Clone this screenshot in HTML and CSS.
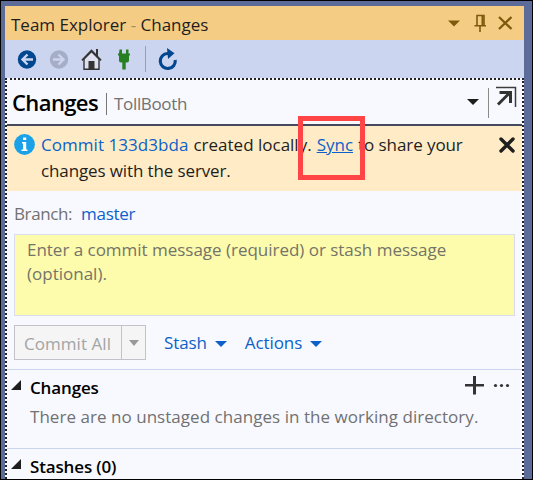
FILE: index.html
```html
<!DOCTYPE html>
<html lang="en">
<head>
<meta charset="utf-8">
<title>Team Explorer - Changes</title>
<link rel="stylesheet" href="styles.css">
</head>
<body>
<div class="window">
  <div class="panel">
    <header class="titlebar">
      <span class="title">Team Explorer <span class="dash">-</span> Changes</span>
      <svg class="title-icons" width="66" height="20" viewBox="0 0 66 20" fill="none" stroke="#7d5a0c">
        <path d="M0 7.500h12l-6 6z" fill="#7d5a0c" stroke="none"/>
        <path d="M29 12.500V2.500h7v10M26.500 12.800h11.500M32 13v6" stroke-width="1.600"/>
        <path d="M34.500 2v10" stroke-width="2"/>
        <path d="M51 4l12.500 12M63.500 4L51 16" stroke-width="2.300"/>
      </svg>
    </header>
    <nav class="toolbar">
      <svg class="tools" width="170" height="38" viewBox="0 0 170 38">
        <circle cx="22" cy="19.500" r="9.200" fill="#00478f"/>
        <path d="M28 19.500H18M22.500 14.500l-5 5 5 5" fill="none" stroke="#ccd5f0" stroke-width="2.400"/>
        <circle cx="54" cy="19.500" r="9.200" fill="#a6aec7"/>
        <path d="M48 19.500H58M53.500 14.500l5 5-5 5" fill="none" stroke="#ccd5f0" stroke-width="2.400"/>
        <path d="M79 19V29.300H94V19L86.500 11.500z" fill="#dedff0" stroke="#333" stroke-width="1.400"/>
        <path d="M77 20.300l9.500-9.800 9.500 9.800" fill="none" stroke="#333" stroke-width="1.800"/>
        <path d="M91 9h2v7h-2zM83.500 21h6v8h-6z" fill="#333"/>
        <path d="M114.500 9.500h2.500v4h4v-4h2.500v4h1.500v2h-1v5q0 2-2 2h-1.300v7h-3.400v-7h-1.300q-2 0-2-2v-5h-1v-2h1z" fill="#267f20"/>
        <path d="M140.500 6v26" stroke="#8aa2cf" stroke-width="1"/>
        <path d="M164 13.500H162.500A7.500 7.500 0 1 0 170.200 20" fill="none" stroke="#00478f" stroke-width="3.200"/>
        <path d="M162 8l7.500 5.300-6.500 5.700z" fill="#00478f"/>
      </svg>
    </nav>
    <main class="page">
      <section class="heading">
        <h1 class="page-title">Changes</h1>
        <i class="rule"></i>
        <span class="repo">TollBooth</span>
        <svg class="heading-icons" width="50" height="32" viewBox="0 0 50 32">
          <path d="M0 13h12l-6 6z" fill="#1e1e1e"/>
          <path d="M21.500 2v30" stroke="#8a8a8a"/>
          <path d="M29 1.500h19.500V21" fill="none" stroke="#3c3c3c" stroke-width="1.500"/>
          <path d="M31 18.500L43 6.500M32.500 6.500h11V17" fill="none" stroke="#333" stroke-width="3"/>
        </svg>
      </section>
      <section class="notice">
        <svg class="info" width="21" height="21" viewBox="0 0 21 21">
          <circle cx="10.500" cy="10.500" r="10.400" fill="#1ba1e8"/>
          <path d="M9 3.500h3.200v2.500H9zM8 8h4.200v7.500h1.300V17H7.500v-1.500H9V9.500H8z" fill="#fff"/>
        </svg>
        <div class="notice-text">
          <div class="line"><a class="commit">Commit 133d3bda</a><span class="created">created locally.</span><a class="sync">Sync</a><span class="share">to share your</span></div>
          <div class="line"><span class="server">changes with the server.</span></div>
        </div>
        <svg class="dismiss" width="16" height="16" viewBox="0 0 16 16"><path d="M2 2l12 12M14 2L2 14" stroke="#1e1e1e" stroke-width="3.400" stroke-linecap="round"/></svg>
        <div class="highlight"></div>
      </section>
      <section class="branch"><span class="branch-label">Branch:</span><a class="branch-name">master</a></section>
      <section class="message"><span class="message-a">Enter a commit message (required) or stash message</span><span class="message-b">(optional).</span></section>
      <section class="actions">
        <div class="split"><span class="commit-all">Commit All</span><span class="split-arrow"><i class="caret"></i></span></div>
        <a class="stash">Stash</a><i class="caret blue"></i>
        <a class="more">Actions</a><i class="caret blue"></i>
      </section>
      <section class="group">
        <div class="group-head">
          <i class="expander"></i><h2 class="group-title">Changes</h2>
          <svg class="group-icons" width="45" height="20" viewBox="0 0 45 20" fill="#333"><path d="M8 0h3v8h8v2.500h-8v8H8v-8H0V8h8z"/><circle cx="30.500" cy="9.500" r="1.600"/><circle cx="36.500" cy="9.500" r="1.600"/><circle cx="42.500" cy="9.500" r="1.600"/></svg>
        </div>
        <p class="empty">There are no unstaged changes in the working directory.</p>
      </section>
      <section class="group">
        <div class="group-head"><i class="expander"></i><h2 class="group-title stashes">Stashes (0)</h2></div>
      </section>
    </main>
  </div>
</div>
</body>
</html>
```
FILE: styles.css
```css
* { box-sizing: border-box; }
body { margin: 0; font: 17px/24px "Open Sans", "Noto Sans", sans-serif; color: #1e1e1e; white-space: nowrap; }
h1, h2, p { margin: 0; }
.window { width: 533px; height: 480px; border: 1px solid #000; background: #5d6b99; padding: 5px 8px 0 4px; overflow: hidden; }
.panel { height: 473px; display: flex; flex-direction: column; overflow: hidden; }
.titlebar { height: 34px; flex: none; background: #f5cc84; display: flex; align-items: center; justify-content: space-between; padding: 0 10px 0 6px; }
.title { padding-top: 3px; }
.dash { color: #a48a5c; }
.toolbar { height: 38px; flex: none; background: #ccd5f0; }
.tools { display: block; overflow: visible; }
.page { flex: 1; min-height: 0; background: #f8f9ff; border: 2px dotted #222; border-bottom: 0; overflow: hidden; }
.heading { height: 46px; border-bottom: 2px solid #46495e; display: flex; align-items: center; padding: 0 5px 0 5px; }
.page-title { font-size: 22px; font-weight: 600; letter-spacing: -.6px; color: #000; }
.rule { width: 1px; height: 22px; background: #777; margin: 4px 7px 0 8px; }
.repo { color: #717171; letter-spacing: -.35px; padding-top: 3px; }
.heading-icons { margin-left: auto; }
.notice { height: 65px; background: #ffecc6; display: flex; position: relative; padding: 7px 7px 0 7px; }
.info { margin-top: 1px; flex: none; }
.notice-text { margin-left: 6px; }
.line { height: 26px; display: flex; }
.commit, .sync, .branch-name, .stash, .more { color: #0b61c9; }
.commit { letter-spacing: .05px; }
.created, .sync, .share { margin-left: 5px; }
.share { letter-spacing: -.08px; }
.server { letter-spacing: -.12px; }
.sync { text-decoration: underline; }
.dismiss { margin: 4px 0 0 auto; }
.highlight { position: absolute; left: 291px; top: -10px; width: 67px; height: 64px; border: 5px solid #ff4545; }
.branch { height: 43px; display: flex; align-items: center; padding: 2px 0 0 7px; }
.branch-label { color: #717171; letter-spacing: -.4px; margin-right: 9px; }
.branch-name { letter-spacing: -.3px; }
.message { height: 82px; width: 501px; margin-left: 7px; border: 1px solid #d9dcec; background: #fdfbac; color: #747468; display: flex; flex-direction: column; padding: 3px 12px; }
.message-a { letter-spacing: -.02px; }
.actions { height: 53px; display: flex; align-items: center; padding-left: 7px; }
.split { display: flex; width: 132px; height: 35px; border: 1px solid #c2c3c9; background: #f5f5f5; color: #a2a4a5; }
.commit-all { width: 107px; border-right: 1px solid #c2c3c9; padding: 6px 0 0 9px; letter-spacing: .05px; }
.split-arrow { flex: 1; display: flex; align-items: center; justify-content: center; }
.caret { border: 6px solid transparent; border-top: 6px solid #999; border-bottom: 0; }
.split-arrow .caret { border-width: 6px 5px 0; }
.caret.blue { border-top-color: #0b61c9; margin: 3px 0 0 8px; }
.stash, .more { margin-left: 18px; padding-top: 1px; letter-spacing: -.1px; }
.group { height: 79px; border-top: 1px solid #ccd5f0; }
.group-head { display: flex; align-items: center; height: 34px; padding: 0 12px 0 4px; }
.expander { border-left: 10px solid transparent; border-bottom: 10px solid #1e1e1e; margin-top: -4px; }
.group-title { font-size: 17px; font-weight: 600; letter-spacing: -.15px; color: #000; margin: 1px 0 0 9px; }
.group-icons { margin: -3px 0 0 auto; }
.empty { color: #717171; padding: 1px 0 0 23px; letter-spacing: .04px; }
```
